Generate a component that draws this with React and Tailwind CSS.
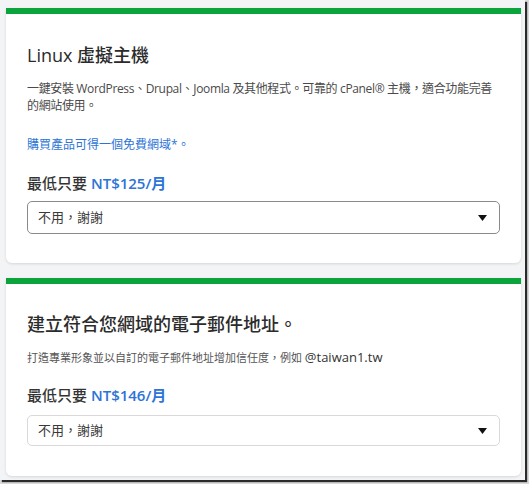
import React from 'react';

const font = { fontFamily: '"Open Sans", "Noto Sans CJK TC", sans-serif' };

const Caret = () => (
    <svg width="9" height="6" viewBox="0 0 9 6" className="shrink-0">
        <path d="M0 0h9L4.5 6z" fill="#111" />
    </svg>
);

const PlanCard = ({ title, children, price, strongBorder, bodyClass, selectClass }) => {
    return (
        <div className="bg-white rounded-b-md shadow-[0_1px_3px_rgba(0,0,0,0.12)]">
            <div className="h-[6px] bg-[#0aa33c]" />
            <div className={bodyClass}>
                <h3 className="text-[18px] leading-[24px] text-[#2b2b2b] font-medium">{title}</h3>
                {children}
                <p className="text-[15px] leading-[20px] font-medium text-[#333]">
                    最低只要 <span className="font-semibold text-[#2c74d6]">{price}</span>
                </p>
                <div
                    className={`flex items-center justify-between pl-[10px] pr-[12px] rounded-[5px] bg-white ${selectClass} ${
                        strongBorder ? 'border-[1.5px] border-[#8a8a8a]' : 'border border-[#d9d9d9]'
                    }`}
                >
                    <span className="text-[13px] text-[#3a3a3a]">不用，謝謝</span>
                    <Caret />
                </div>
            </div>
        </div>
    );
};

export default function App() {
    return (
        <div lang="zh-Hant-TW" className="w-[529px] h-[484px] bg-[#d8d8d8]" style={font}>
            <div className="w-[525px] h-[480px] bg-[#f2f4f6] shadow-[2px_2px_1px_#2a2a2a] pt-[8px] pl-[6px] pr-[4px] flex flex-col gap-[15px]">
                <PlanCard
                    title="Linux 虛擬主機"
                    price="NT$125/月"
                    strongBorder
                    bodyClass="px-[21px] pt-[29px] pb-[29px]"
                    selectClass="mt-[8px] h-[33px]"
                >
                    <p className="mt-[13px] text-[12px] leading-[17px] tracking-[-0.35px] text-[#4a4a4a]">
                        一鍵安裝 WordPress、Drupal、Joomla 及其他程式。可靠的 cPanel® 主機，適合功能完善的網站使用。
                    </p>
                    <p className="mt-[22px] mb-[20px] text-[12px] leading-[17px] text-[#2c74d6]">購買產品可得一個免費網域*。</p>
                </PlanCard>
                <PlanCard
                    title="建立符合您網域的電子郵件地址。"
                    price="NT$146/月"
                    bodyClass="px-[21px] pt-[28px] pb-[30px]"
                    selectClass="mt-[10px] h-[31px]"
                >
                    <p className="mt-[13px] mb-[19px] text-[11px] leading-[17px] text-[#555]">
                        打造專業形象並以自訂的電子郵件地址增加信任度，例如 <span className="text-[13px] text-[#333]">@taiwan1.tw</span>
                    </p>
                </PlanCard>
            </div>
        </div>
    );
}
